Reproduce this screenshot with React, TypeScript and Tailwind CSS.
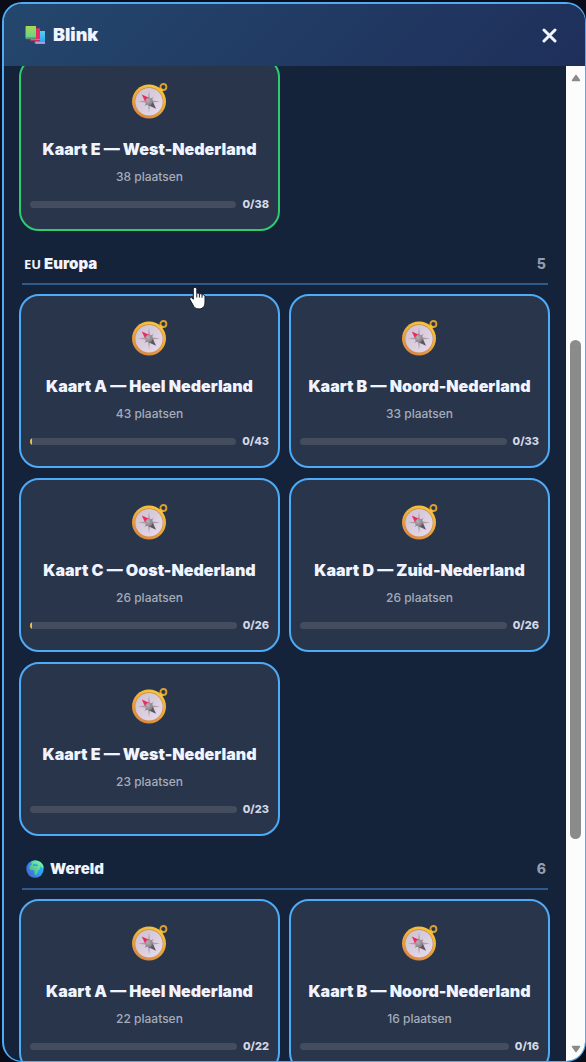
import React from "react";

type Card = { name: string; places: number; started?: boolean };

const europe: Card[] = [
  { name: "Kaart A — Heel Nederland", places: 43, started: true },
  { name: "Kaart B — Noord-Nederland", places: 33 },
  { name: "Kaart C — Oost-Nederland", places: 26, started: true },
  { name: "Kaart D — Zuid-Nederland", places: 26 },
  { name: "Kaart E — West-Nederland", places: 23 },
];

const world: Card[] = [
  { name: "Kaart A — Heel Nederland", places: 22 },
  { name: "Kaart B — Noord-Nederland", places: 16 },
];

function Compass() {
  return (
    <svg viewBox="0 0 36 36" className="size-9 shrink-0" aria-hidden="true">
      <defs>
        <linearGradient id="rim" x1="0.8" y1="0" x2="0.3" y2="1">
          <stop offset="0" stopColor="#f9c93b" />
          <stop offset="0.55" stopColor="#eba83a" />
          <stop offset="1" stopColor="#dc8540" />
        </linearGradient>
        <linearGradient id="dial" x1="0" y1="0" x2="1" y2="1">
          <stop offset="0" stopColor="#cdbfce" />
          <stop offset="1" stopColor="#e7dcee" />
        </linearGradient>
        <radialGradient id="hub" cx="0.35" cy="0.35" r="0.8">
          <stop offset="0" stopColor="#b9b0b5" />
          <stop offset="1" stopColor="#7c757b" />
        </radialGradient>
      </defs>
      <circle cx="31.4" cy="4" r="3" fill="none" stroke="#dda02f" strokeWidth="1.9" />
      <path d="M26 8l3-3.200 2.400 2.500-2.400 3z" fill="#f2b934" />
      <circle cx="17" cy="18.500" r="17" fill="url(#rim)" />
      <circle cx="17" cy="18.500" r="14.2" fill="#c58a4c" />
      <circle cx="17" cy="18.700" r="13.7" fill="url(#dial)" />
      <path d="M17 7.500l1.300 9.500L28 18.500l-9.700 1.400L17 29.500l-1.300-9.600L6 18.500l9.700-1.500z" fill="#aaa2ad" />
      <path d="M21.500 14l-3 6L12.500 23l3-6z" fill="#9c949f" />
      <path d="M9.800 11.500l7.200 3.200-3.800 4z" fill="#f0265f" />
      <path d="M24 25.700l-3.200-7.200-3.800 3.900z" fill="#5c585f" />
      <circle cx="17" cy="18.500" r="3.700" fill="url(#hub)" />
    </svg>
  );
}

function Books() {
  return (
    <svg viewBox="0 0 20 18" className="h-[18px] w-5" aria-hidden="true">
      <defs>
        <linearGradient id="green" x1="0" y1="0" x2="0" y2="1">
          <stop offset="0" stopColor="#a6da55" />
          <stop offset="1" stopColor="#69d08b" />
        </linearGradient>
        <linearGradient id="blue" x1="0" y1="0" x2="0" y2="1">
          <stop offset="0" stopColor="#58d0f3" />
          <stop offset="1" stopColor="#2ba4f2" />
        </linearGradient>
      </defs>
      <path d="M10 5h10v11H10z" fill="url(#blue)" />
      <path d="M10 15.8h10V18H10.5L9.5 17z" fill="#8d88d8" />
      <path d="M11 16.4h9v.8h-9z" fill="#c9bde8" />
      <path d="M5 2.2h10V13H5z" fill="#e82c60" />
      <path d="M5 13h10v2.2H6L5 14.4z" fill="#b93463" />
      <path d="M6 13.3h9v.8H6z" fill="#c690ad" />
      <path d="M0 .5L1.3 0v12L0 12.6z" fill="#479447" />
      <path d="M1 0h10v11H1z" fill="url(#green)" />
      <path d="M0 11.4L1 11h10v2.2H1z" fill="#47896b" />
      <path d="M1 11.4h10v.8H1z" fill="#8ab69d" />
    </svg>
  );
}

function Globe() {
  return (
    <svg viewBox="0 0 18 18" className="size-[18px]" aria-hidden="true">
      <defs>
        <linearGradient id="sea" x1="1" y1="0.2" x2="0" y2="0.8">
          <stop offset="0" stopColor="#27c3f7" />
          <stop offset="0.5" stopColor="#3095ee" />
          <stop offset="1" stopColor="#4a61cf" />
        </linearGradient>
        <linearGradient id="land" x1="1" y1="0" x2="0" y2="1">
          <stop offset="0" stopColor="#7dffb0" />
          <stop offset="1" stopColor="#45a984" />
        </linearGradient>
      </defs>
      <circle cx="9" cy="9" r="8.7" fill="url(#sea)" />
      <path
        d="M5.500 1.500Q7.500 .3 10 .5q5 .6 7.200 5l.2 2.400-1.300 0-1-1.500-1.200.5.400 1.800-1.200 1.400-1 .5-.2 2-1.400 2.200-1.300.6-.9-2.400.2-1.900-1.200-1-2 .1-1.900-1.400.2-2.300 1.300-1.400 1-.4-.4-1z"
        fill="url(#land)"
      />
      <path d="M7 4.800l1.500-.8 1.200.8 1.700-.3.600 1.200-1.900.2-1.600-.4-1.500.3z" fill="#2f8fd8" />
    </svg>
  );
}

function MapCard({ card, border }: { card: Card; border: string }) {
  return (
    <button
      type="button"
      className={`flex min-w-0 cursor-pointer flex-col items-center rounded-[20px] border-2 bg-[#29354b] px-[9px] pt-6 pb-[17px] ${border}`}
    >
      <Compass />
      <span className="mt-[18px] text-[16px] leading-6 font-black whitespace-nowrap text-[#f0f4ff]">{card.name}</span>
      <span className="mt-1.5 text-[12px] leading-5 font-medium text-[#a5acba]">{card.places} plaatsen</span>
      <span className="mt-[9px] flex w-full items-center gap-1.5">
        <span className="h-[7px] flex-1 overflow-hidden rounded-full bg-[#444d5e]">
          {card.started && <span className="block h-full w-0.5 bg-[#f5bd3d]" />}
        </span>
        <span className="text-[11px] leading-4 font-extrabold text-[#d3d8e4]">0/{card.places}</span>
      </span>
    </button>
  );
}

function Heading({ children, count }: { children: React.ReactNode; count: number }) {
  return (
    <div className="mt-[21px] mr-0.5 mb-[9px] ml-[3px] flex items-center justify-between border-b-2 border-[#2f5a8b] px-0.5 pb-[7px]">
      <h2 className="flex items-center text-[15px] leading-6 font-black text-[#f0f4ff]">{children}</h2>
      <span className="text-[14px] leading-6 font-extrabold text-[#959dac]">{count}</span>
    </div>
  );
}

function Grid({ cards, border }: { cards: Card[]; border: string }) {
  return (
    <div className="grid grid-cols-2 gap-x-[9px] gap-y-2.5">
      {cards.map((card) => (
        <MapCard key={card.name} card={card} border={border} />
      ))}
    </div>
  );
}

export default function App() {
  return (
    <div className="h-screen overflow-hidden bg-[#0a0d17] pt-0.5 pl-0.5 font-['Inter',sans-serif]">
      <section className="relative flex h-full flex-col overflow-hidden rounded-[20px] border-t-2 border-r border-b border-l-2 border-[#4dabf7] bg-[#14233a]">
        <header className="flex h-[62px] shrink-0 items-center justify-between bg-linear-135 from-[#24476d] to-[#1e2f5a] pr-7 pl-[21px]">
          <h1 className="flex items-center gap-2 text-[18px] leading-6 font-black text-[#f0f4ff]">
            <Books />
            Blink
          </h1>
          <button type="button" aria-label="Sluiten" className="cursor-pointer">
            <svg viewBox="0 0 16 16" className="size-4" aria-hidden="true">
              <path d="M3 3l11 11M14 3l-11 11" stroke="#f0f4ff" strokeWidth="3" strokeLinecap="round" />
            </svg>
          </button>
        </header>

        <div className="flex min-h-0 flex-1">
          <main className="min-w-0 flex-1 overflow-hidden pr-4 pl-[15px]">
            <div className="-mt-[9px]">
              <Grid cards={[{ name: "Kaart E — West-Nederland", places: 38 }]} border="border-[#2ecc71]" />
              <Heading count={5}>
                <span className="mr-[3px] font-['Noto_Sans',sans-serif] text-[13px] font-bold">EU</span>Europa
              </Heading>
              <Grid cards={europe} border="border-[#4dabf7]" />
              <Heading count={6}>
                <span className="mr-1.5 ml-0.5">
                  <Globe />
                </span>
                Wereld
              </Heading>
              <Grid cards={world} border="border-[#4dabf7]" />
            </div>
          </main>

          <div className="flex w-[19px] shrink-0 flex-col items-center bg-[#fcfcfc] py-2" aria-hidden="true">
            <svg viewBox="0 0 10 8" className="h-2 w-2.5">
              <path d="M5 1.500L8.500 6.500H1.500z" fill="#8b8b8b" stroke="#8b8b8b" strokeWidth="1.500" strokeLinejoin="round" />
            </svg>
            <div className="flex w-[11px] flex-1 flex-col">
              <div className="grow-[258]" />
              <div className="grow-[499] rounded-full bg-[#8b8b8b]" />
              <div className="grow-[206]" />
            </div>
            <svg viewBox="0 0 10 8" className="h-2 w-2.5">
              <path d="M5 6.500L1.500 1.500h7z" fill="#8b8b8b" stroke="#8b8b8b" strokeWidth="1.500" strokeLinejoin="round" />
            </svg>
          </div>
        </div>

        <svg viewBox="0 0 18 24" className="absolute top-[282px] left-[185px] h-6 w-[18px]" aria-hidden="true">
          <path
            d="M6 1.500C7.200 1.500 7.800 2.300 7.800 3.300V7.500C8.500 6.800 10 7 10.400 8c.9-.5 2.200-.2 2.600.8 1.200-.4 3 .2 3 2V16c0 3-1.200 7-6 7-3.500 0-4.800-1.600-6-4L.9 13.500c-.8-1.500 1.300-2.600 2.300-1.500l1.100 1.300V3.300c0-1 .6-1.800 1.700-1.800z"
            fill="#fff"
            stroke="#111827"
            strokeWidth="1"
          />
          <path d="M7.800 7.500v4M10.400 8v3.500M13 9v2.800" stroke="#111827" strokeWidth="1" />
        </svg>
      </section>
    </div>
  );
}
